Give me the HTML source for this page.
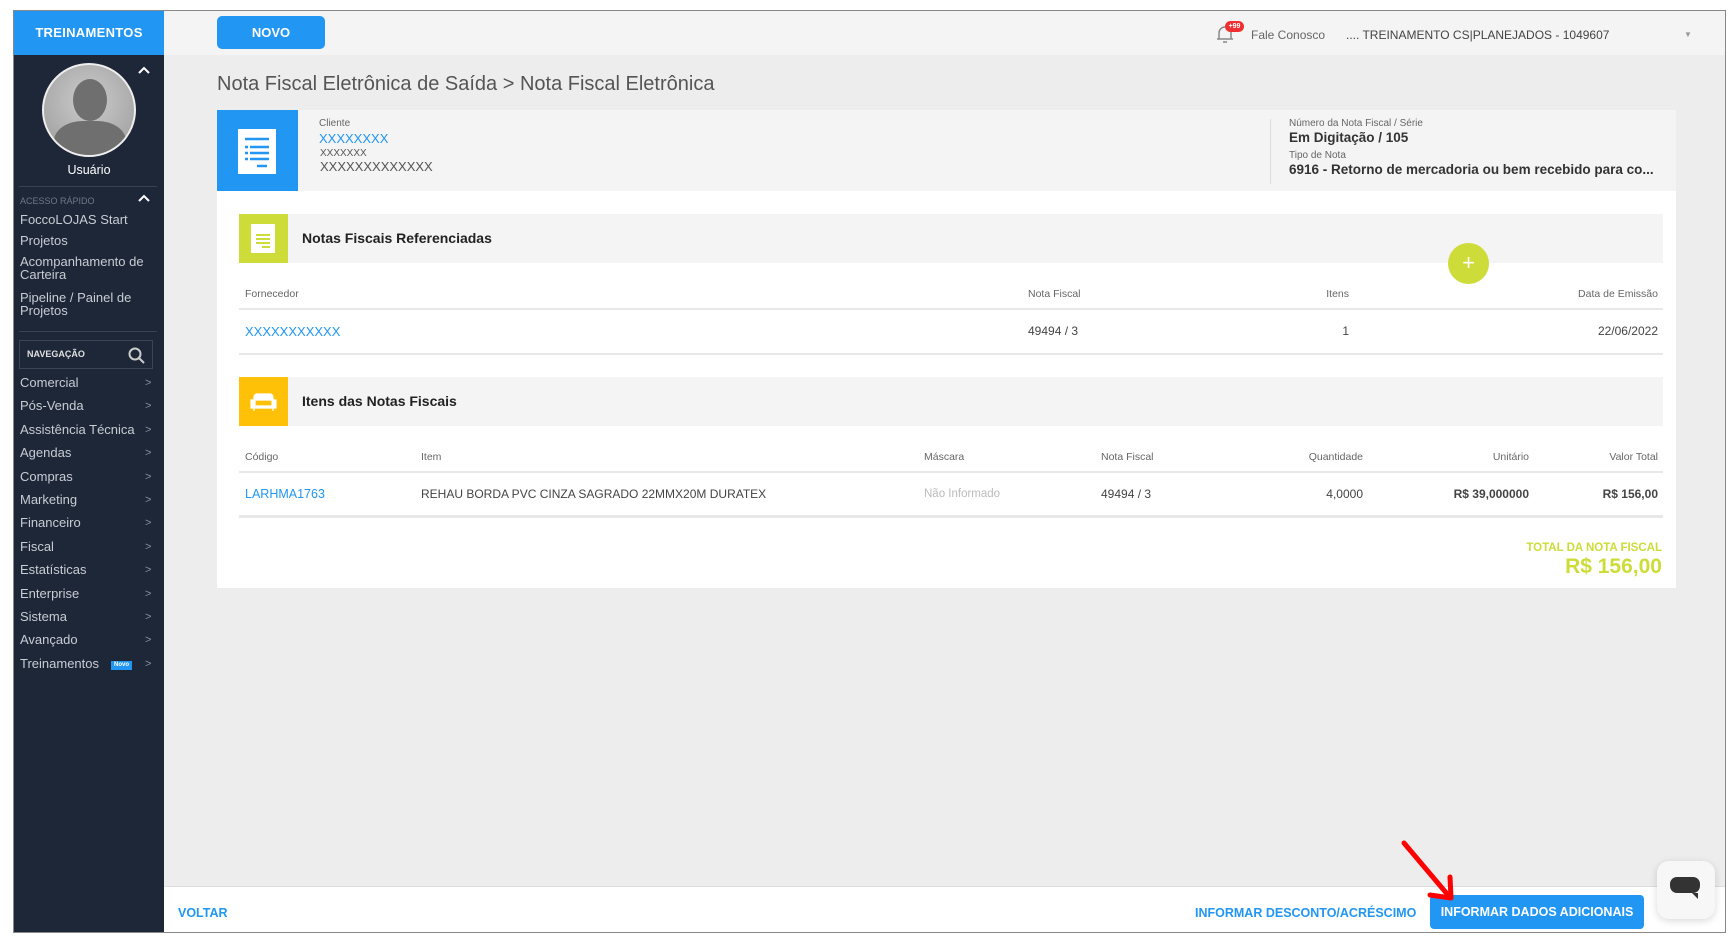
<!DOCTYPE html>
<html><head><meta charset="utf-8"><style>
*{margin:0;padding:0;box-sizing:border-box}
body{width:1733px;height:944px;background:#fff;font-family:"Liberation Sans",sans-serif;position:relative;overflow:hidden}
.a{position:absolute;white-space:nowrap}
#frame{position:absolute;left:13px;top:10px;width:1713px;height:923px;border:1px solid #888;background:#ededed;overflow:hidden}
#side{position:absolute;left:0;top:0;width:150px;height:923px;background:#1e2738}
#sbh{position:absolute;left:0;top:0;width:150px;height:44px;background:#2196f3;color:#fff;font-weight:bold;font-size:13px;text-align:center;line-height:44px;letter-spacing:.3px}
.si{position:absolute;left:6px;color:#c8ccd3;font-size:13px}
.ch{position:absolute;left:131px;color:#8a909b;font-size:11px}
#top{position:absolute;left:150px;top:0;right:0;height:44px;background:#f4f4f4}
.c{color:#444;font-size:12px}
.h{color:#666;font-size:10.5px}
.lnk{color:#2196f3}
.ln{position:absolute;height:2px;background:#e8e8e8}
</style></head><body>
<div id="frame">
<div id="side">
<div id="sbh">TREINAMENTOS</div>
<div class="a" style="left:28px;top:52px;width:94px;height:94px;border-radius:50%;border:2px solid #eee;background:radial-gradient(circle at 50% 40%,#ccc,#999);overflow:hidden">
<div style="position:absolute;left:29px;top:14px;width:34px;height:42px;border-radius:50%;background:#6f6f6f"></div>
<div style="position:absolute;left:10px;top:56px;width:72px;height:50px;border-radius:40% 40% 0 0;background:#6f6f6f"></div></div>
<svg class="a" style="left:124px;top:55px" width="12" height="8"><path d="M1 7 L6 2 L11 7" fill="none" stroke="#fff" stroke-width="2"/></svg>
<div class="a" style="left:0;width:150px;text-align:center;top:152px;color:#fff;font-size:12.5px">Usuário</div>
<div class="a" style="left:5px;top:175px;width:138px;height:1px;background:#394255"></div>
<div class="a" style="left:6px;top:185px;color:#6f7686;font-size:9px">ACESSO RÁPIDO</div>
<svg class="a" style="left:124px;top:183px" width="12" height="8"><path d="M1 7 L6 2 L11 7" fill="none" stroke="#fff" stroke-width="2"/></svg>
<div class="si" style="top:201px">FoccoLOJAS Start</div>
<div class="si" style="top:222px">Projetos</div>
<div class="si" style="top:244px;line-height:13px;white-space:normal;width:140px">Acompanhamento de Carteira</div>
<div class="si" style="top:280px;line-height:13px;white-space:normal;width:140px">Pipeline / Painel de Projetos</div>
<div class="a" style="left:5px;top:320px;width:138px;height:1px;background:#394255"></div>
<div class="a" style="left:5px;top:329px;width:134px;height:29px;border:1px solid #3b4457"></div>
<div class="a" style="left:13px;top:338px;color:#e0e0e0;font-size:9px;font-weight:bold">NAVEGAÇÃO</div>
<svg class="a" style="left:114px;top:336px" width="18" height="18"><circle cx="7" cy="7" r="5.5" fill="none" stroke="#ccc" stroke-width="2"/><line x1="11" y1="11" x2="16" y2="16" stroke="#ccc" stroke-width="2"/></svg>
<div class="si" style="top:364px">Comercial</div><div class="ch" style="top:366px">&gt;</div>
<div class="si" style="top:387px">Pós-Venda</div><div class="ch" style="top:389px">&gt;</div>
<div class="si" style="top:411px">Assistência Técnica</div><div class="ch" style="top:413px">&gt;</div>
<div class="si" style="top:434px">Agendas</div><div class="ch" style="top:436px">&gt;</div>
<div class="si" style="top:458px">Compras</div><div class="ch" style="top:460px">&gt;</div>
<div class="si" style="top:481px">Marketing</div><div class="ch" style="top:483px">&gt;</div>
<div class="si" style="top:504px">Financeiro</div><div class="ch" style="top:506px">&gt;</div>
<div class="si" style="top:528px">Fiscal</div><div class="ch" style="top:530px">&gt;</div>
<div class="si" style="top:551px">Estatísticas</div><div class="ch" style="top:553px">&gt;</div>
<div class="si" style="top:575px">Enterprise</div><div class="ch" style="top:577px">&gt;</div>
<div class="si" style="top:598px">Sistema</div><div class="ch" style="top:600px">&gt;</div>
<div class="si" style="top:621px">Avançado</div><div class="ch" style="top:623px">&gt;</div>
<div class="si" style="top:645px">Treinamentos</div>
<div class="a" style="left:97px;top:650px;width:21px;height:9px;background:#2196f3;color:#fff;font-size:6px;font-weight:bold;text-align:center;line-height:9px">Novo</div>
<div class="ch" style="top:647px">&gt;</div>
</div>
<div id="top">
<div class="a" style="left:53px;top:5px;width:108px;height:33px;background:#2196f3;border-radius:5px;color:#fff;font-weight:bold;font-size:13px;text-align:center;line-height:33px">NOVO</div>
</div>
<svg class="a" style="left:1200px;top:12px" width="22" height="22"><path d="M5 16 V10 a6 6 0 0 1 12 0 V16 H19 M3 16 H19 M9 19 H13" fill="none" stroke="#888" stroke-width="1.5"/></svg>
<div class="a" style="left:1211px;top:10px;width:19px;height:11px;border-radius:6px;background:#f03030;color:#fff;font-size:7px;font-weight:bold;text-align:center;line-height:11px">+99</div>
<div class="a" style="left:1237px;top:17px;color:#666;font-size:12px">Fale Conosco</div>
<div class="a" style="left:1332px;top:17px;color:#444;font-size:12px">.... TREINAMENTO CS|PLANEJADOS - 1049607</div>
<div class="a" style="left:1670px;top:19px;color:#999;font-size:8px">&#9660;</div>
<div class="a" style="left:203px;top:62px;color:#555;font-size:20px">Nota Fiscal Eletrônica de Saída &gt; Nota Fiscal Eletrônica</div>
<!-- header card -->
<div class="a" style="left:203px;top:99px;width:1459px;height:81px;background:#f4f4f4"></div>
<div class="a" style="left:203px;top:99px;width:81px;height:81px;background:#2196f3"></div>
<div class="a" style="left:224px;top:118px;width:38px;height:45px;background:#fff"></div>
<svg class="a" style="left:231px;top:126px" width="24" height="32"><g stroke="#2196f3" stroke-width="2.5"><line x1="0" y1="2" x2="24" y2="2"/><line x1="0" y1="10" x2="24" y2="10" stroke-dasharray="3 2 17 0"/><line x1="0" y1="16" x2="24" y2="16" stroke-dasharray="3 2 17 0"/><line x1="0" y1="22" x2="24" y2="22" stroke-dasharray="3 2 17 0"/><line x1="12" y1="29" x2="22" y2="29"/></g></svg>
<div class="a h" style="left:305px;top:107px;font-size:10px">Cliente</div>
<div class="a lnk" style="left:305px;top:120px;font-size:13px">XXXXXXXX</div>
<div class="a" style="left:306px;top:137px;color:#555;font-size:10px">XXXXXXX</div>
<div class="a" style="left:306px;top:148px;color:#555;font-size:13px">XXXXXXXXXXXXX</div>
<div class="a" style="left:1256px;top:108px;width:1px;height:65px;background:#ddd"></div>
<div class="a h" style="left:1275px;top:107px;font-size:10px">Número da Nota Fiscal / Série</div>
<div class="a" style="left:1275px;top:119px;color:#333;font-size:13.5px;font-weight:bold">Em Digitação / 105</div>
<div class="a h" style="left:1275px;top:139px;font-size:10px">Tipo de Nota</div>
<div class="a" style="left:1275px;top:151px;color:#333;font-size:13.5px;font-weight:bold">6916 - Retorno de mercadoria ou bem recebido para co...</div>
<!-- white card -->
<div class="a" style="left:203px;top:180px;width:1459px;height:397px;background:#fff"></div>
<div class="a" style="left:225px;top:203px;width:1424px;height:49px;background:#f4f4f4"></div>
<div class="a" style="left:225px;top:203px;width:49px;height:49px;background:#cddc39"></div>
<div class="a" style="left:237px;top:213px;width:24px;height:29px;background:#fff"></div>
<svg class="a" style="left:242px;top:221px" width="14" height="16"><g stroke="#cddc39" stroke-width="2"><line x1="0" y1="3" x2="14" y2="3"/><line x1="0" y1="7" x2="14" y2="7"/><line x1="0" y1="11" x2="14" y2="11"/><line x1="6" y1="15" x2="14" y2="15"/></g></svg>
<div class="a" style="left:288px;top:219px;color:#222;font-size:14px;font-weight:bold">Notas Fiscais Referenciadas</div>
<div class="a" style="left:1434px;top:232px;width:41px;height:41px;border-radius:50%;background:#cddc39;color:#fff;font-size:22px;text-align:center;line-height:39px">+</div>
<div class="a h" style="left:231px;top:277px">Fornecedor</div>
<div class="a h" style="left:1014px;top:277px">Nota Fiscal</div>
<div class="a h" style="left:1270px;top:277px;width:65px;text-align:right">Itens</div>
<div class="a h" style="left:1500px;top:277px;width:144px;text-align:right">Data de Emissão</div>
<div class="ln" style="left:225px;top:297px;width:1424px"></div>
<div class="a lnk" style="left:231px;top:313px;font-size:13px">XXXXXXXXXXX</div>
<div class="a c" style="left:1014px;top:313px">49494 / 3</div>
<div class="a c" style="left:1270px;top:313px;width:65px;text-align:right">1</div>
<div class="a c" style="left:1500px;top:313px;width:144px;text-align:right">22/06/2022</div>
<div class="ln" style="left:225px;top:342px;width:1424px"></div>
<div class="a" style="left:225px;top:366px;width:1424px;height:49px;background:#f4f4f4"></div>
<div class="a" style="left:225px;top:366px;width:49px;height:49px;background:#ffc107"></div>
<svg class="a" style="left:236px;top:380px" width="27" height="22"><path d="M4 6 a3 3 0 0 1 3-3 h13 a3 3 0 0 1 3 3 v3 h-19z M1 9 h4 v6 h17 v-6 h4 v8 h-25z M4 17 v3 M23 17 v3" fill="#fff" stroke="#fff" stroke-width="1.2"/></svg>
<div class="a" style="left:288px;top:382px;color:#222;font-size:14px;font-weight:bold">Itens das Notas Fiscais</div>
<div class="a h" style="left:231px;top:440px">Código</div>
<div class="a h" style="left:407px;top:440px">Item</div>
<div class="a h" style="left:910px;top:440px">Máscara</div>
<div class="a h" style="left:1087px;top:440px">Nota Fiscal</div>
<div class="a h" style="left:1250px;top:440px;width:99px;text-align:right">Quantidade</div>
<div class="a h" style="left:1400px;top:440px;width:115px;text-align:right">Unitário</div>
<div class="a h" style="left:1544px;top:440px;width:100px;text-align:right">Valor Total</div>
<div class="ln" style="left:225px;top:460px;width:1424px"></div>
<div class="a lnk" style="left:231px;top:476px;font-size:12.5px">LARHMA1763</div>
<div class="a c" style="left:407px;top:476px">REHAU BORDA PVC CINZA SAGRADO 22MMX20M DURATEX</div>
<div class="a" style="left:910px;top:477px;color:#bbb;font-size:11.5px">Não Informado</div>
<div class="a c" style="left:1087px;top:476px">49494 / 3</div>
<div class="a c" style="left:1250px;top:476px;width:99px;text-align:right">4,0000</div>
<div class="a c" style="left:1400px;top:476px;width:115px;text-align:right;font-weight:bold">R$ 39,000000</div>
<div class="a c" style="left:1544px;top:476px;width:100px;text-align:right;font-weight:bold">R$ 156,00</div>
<div class="ln" style="left:225px;top:504px;width:1424px;height:3px"></div>
<div class="a" style="right:63px;top:531px;color:#cddc39;font-size:11.5px;font-weight:bold">TOTAL DA NOTA FISCAL</div>
<div class="a" style="right:63px;top:544px;color:#cddc39;font-size:21px;font-weight:bold">R$ 156,00</div>
<!-- footer -->
<div class="a" style="left:150px;top:875px;right:0;height:48px;background:#fff;border-top:1px solid #ddd"></div>
<div class="a" style="left:164px;top:895px;color:#2196f3;font-size:12.5px;font-weight:bold">VOLTAR</div>
<div class="a" style="left:1181px;top:895px;color:#2196f3;font-size:12.5px;font-weight:bold">INFORMAR DESCONTO/ACRÉSCIMO</div>
<div class="a" style="left:1416px;top:884px;width:214px;height:34px;background:#2196f3;border-radius:4px;color:#fff;font-size:12.5px;font-weight:bold;text-align:center;line-height:34px">INFORMAR DADOS ADICIONAIS</div>
<div class="a" style="left:1643px;top:850px;width:58px;height:58px;background:#f7f7f7;border-radius:12px;box-shadow:0 2px 8px rgba(0,0,0,.15)"></div>
<svg class="a" style="left:1656px;top:866px" width="32" height="26"><rect x="0" y="0" width="30" height="16" rx="7" fill="#333"/><path d="M22 16 L28 16 L28 22z" fill="#333"/></svg>
<svg class="a" style="left:1382px;top:828px" width="70" height="66"><path d="M8 4 L52 56" stroke="#f00" stroke-width="5" stroke-linecap="round"/><path d="M34 56 L55 59 L54 38" fill="none" stroke="#f00" stroke-width="5" stroke-linecap="round" stroke-linejoin="round"/></svg>
</div>
</body></html>
